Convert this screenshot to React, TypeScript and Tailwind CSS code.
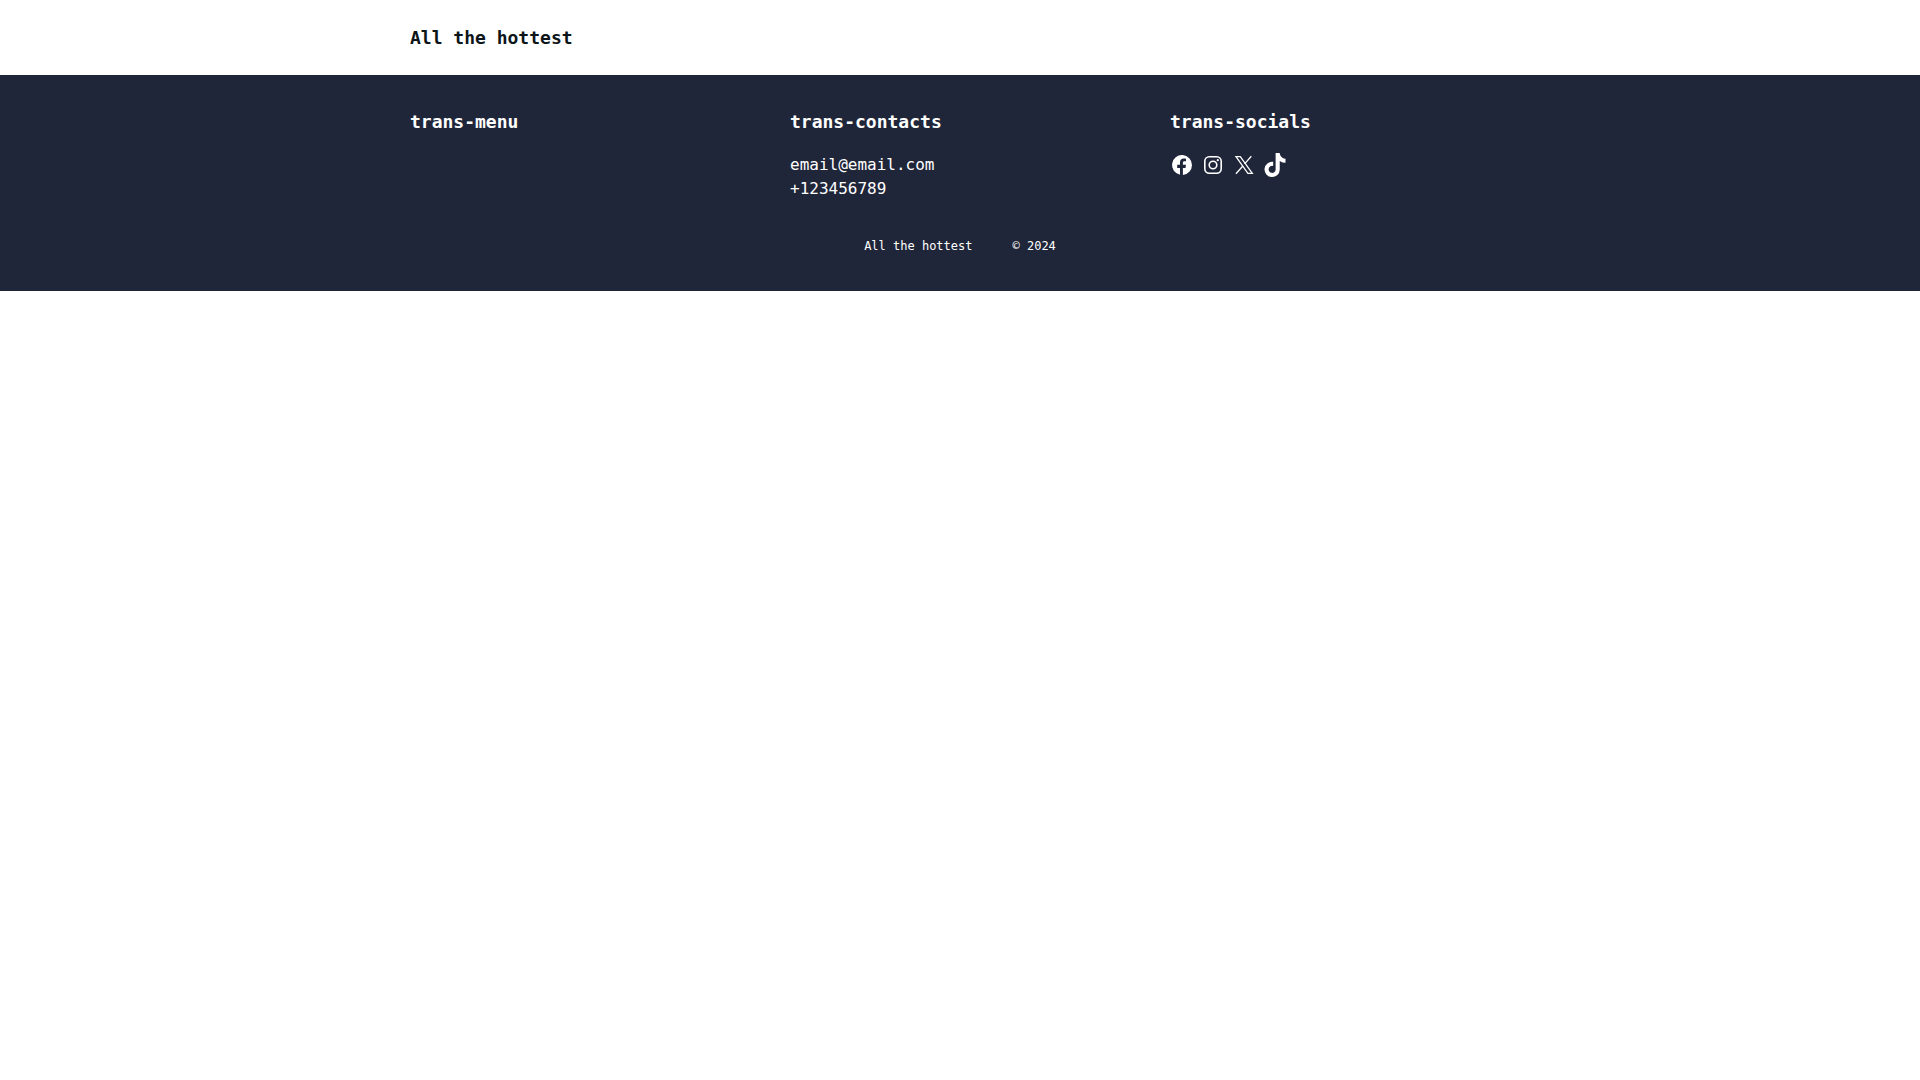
import React from 'react';
import { FaTiktok } from 'react-icons/fa';

const siteName = 'All the hottest';

const FacebookIcon: React.FC = () => (
  <svg viewBox="0 0 24 24" fill="currentColor" className="size-6">
    <path d="M22 12a10 10 0 1 0-12 9.8V14.9H7.2V11.8H10V9.6C10 6.9 11.4 5.6 13.8 5.6c.9 0 1.6.1 2.2.2v2.5h-1.5c-1.2 0-1.6.6-1.6 1.6v1.9H16l-.5 3.1h-2.6v7A10 10 0 0 0 22 12z" />
  </svg>
);

const InstagramIcon: React.FC = () => (
  <svg viewBox="0 0 24 24" fill="none" stroke="currentColor" strokeWidth="1.6" className="size-6">
    <rect x="3.8" y="3.8" width="16.4" height="16.4" rx="4.5" />
    <circle cx="12" cy="12" r="3.8" />
    <circle cx="16.8" cy="7.2" r="1.1" fill="currentColor" stroke="none" />
  </svg>
);

const XIcon: React.FC = () => (
  <svg viewBox="0 0 24 24" fill="none" stroke="currentColor" strokeWidth="1.3" className="size-6">
    <path d="M4 3.6h4.3l12 16.8h-4.4z" />
    <path d="M19.3 3.2l-6.7 7.7M10.9 13l-7 7.8" />
  </svg>
);

const socials = [
  { name: 'Facebook', href: '#facebook', icon: <FacebookIcon /> },
  { name: 'Instagram', href: '#instagram', icon: <InstagramIcon /> },
  { name: 'X', href: '#x', icon: <XIcon /> },
  { name: 'TikTok', href: '#tiktok', icon: <FaTiktok className="size-6" /> }
];

const Header: React.FC = () => (
  <header className="bg-white">
    <div className="max-w-[1140px] mx-auto px-5 py-6">
      <a href="#home" className="block text-lg leading-[27px] font-bold">{siteName}</a>
    </div>
  </header>
);

const Footer: React.FC = () => (
  <footer className="bg-[#202639] text-white">
    <div className="max-w-[1140px] mx-auto px-5 pt-8 pb-9">
      <div className="grid grid-cols-3 gap-10">
        <div>
          <h2 className="mb-4 text-lg leading-[30px] font-bold">trans-menu</h2>
        </div>
        <div>
          <h2 className="mb-4 text-lg leading-[30px] font-bold">trans-contacts</h2>
          <a href="mailto:email@email.com" className="block">email@email.com</a>
          <a href="tel:+123456789" className="block">+123456789</a>
        </div>
        <div>
          <h2 className="mb-4 text-lg leading-[30px] font-bold">trans-socials</h2>
          <div className="flex gap-[7px]">
            {socials.map(social => (
              <a key={social.name} href={social.href} aria-label={social.name}>
                {social.icon}
              </a>
            ))}
          </div>
        </div>
      </div>
      <div className="flex justify-center gap-10 pt-9 text-xs leading-[18px]">
        <span>{siteName}</span>
        <span>© 2024</span>
      </div>
    </div>
  </footer>
);

const App: React.FC = () => {
  return (
    <div className="font-['DejaVu_Sans_Mono',monospace] text-base text-[#0d1519]">
      <Header />
      <Footer />
    </div>
  );
};

export default App;
